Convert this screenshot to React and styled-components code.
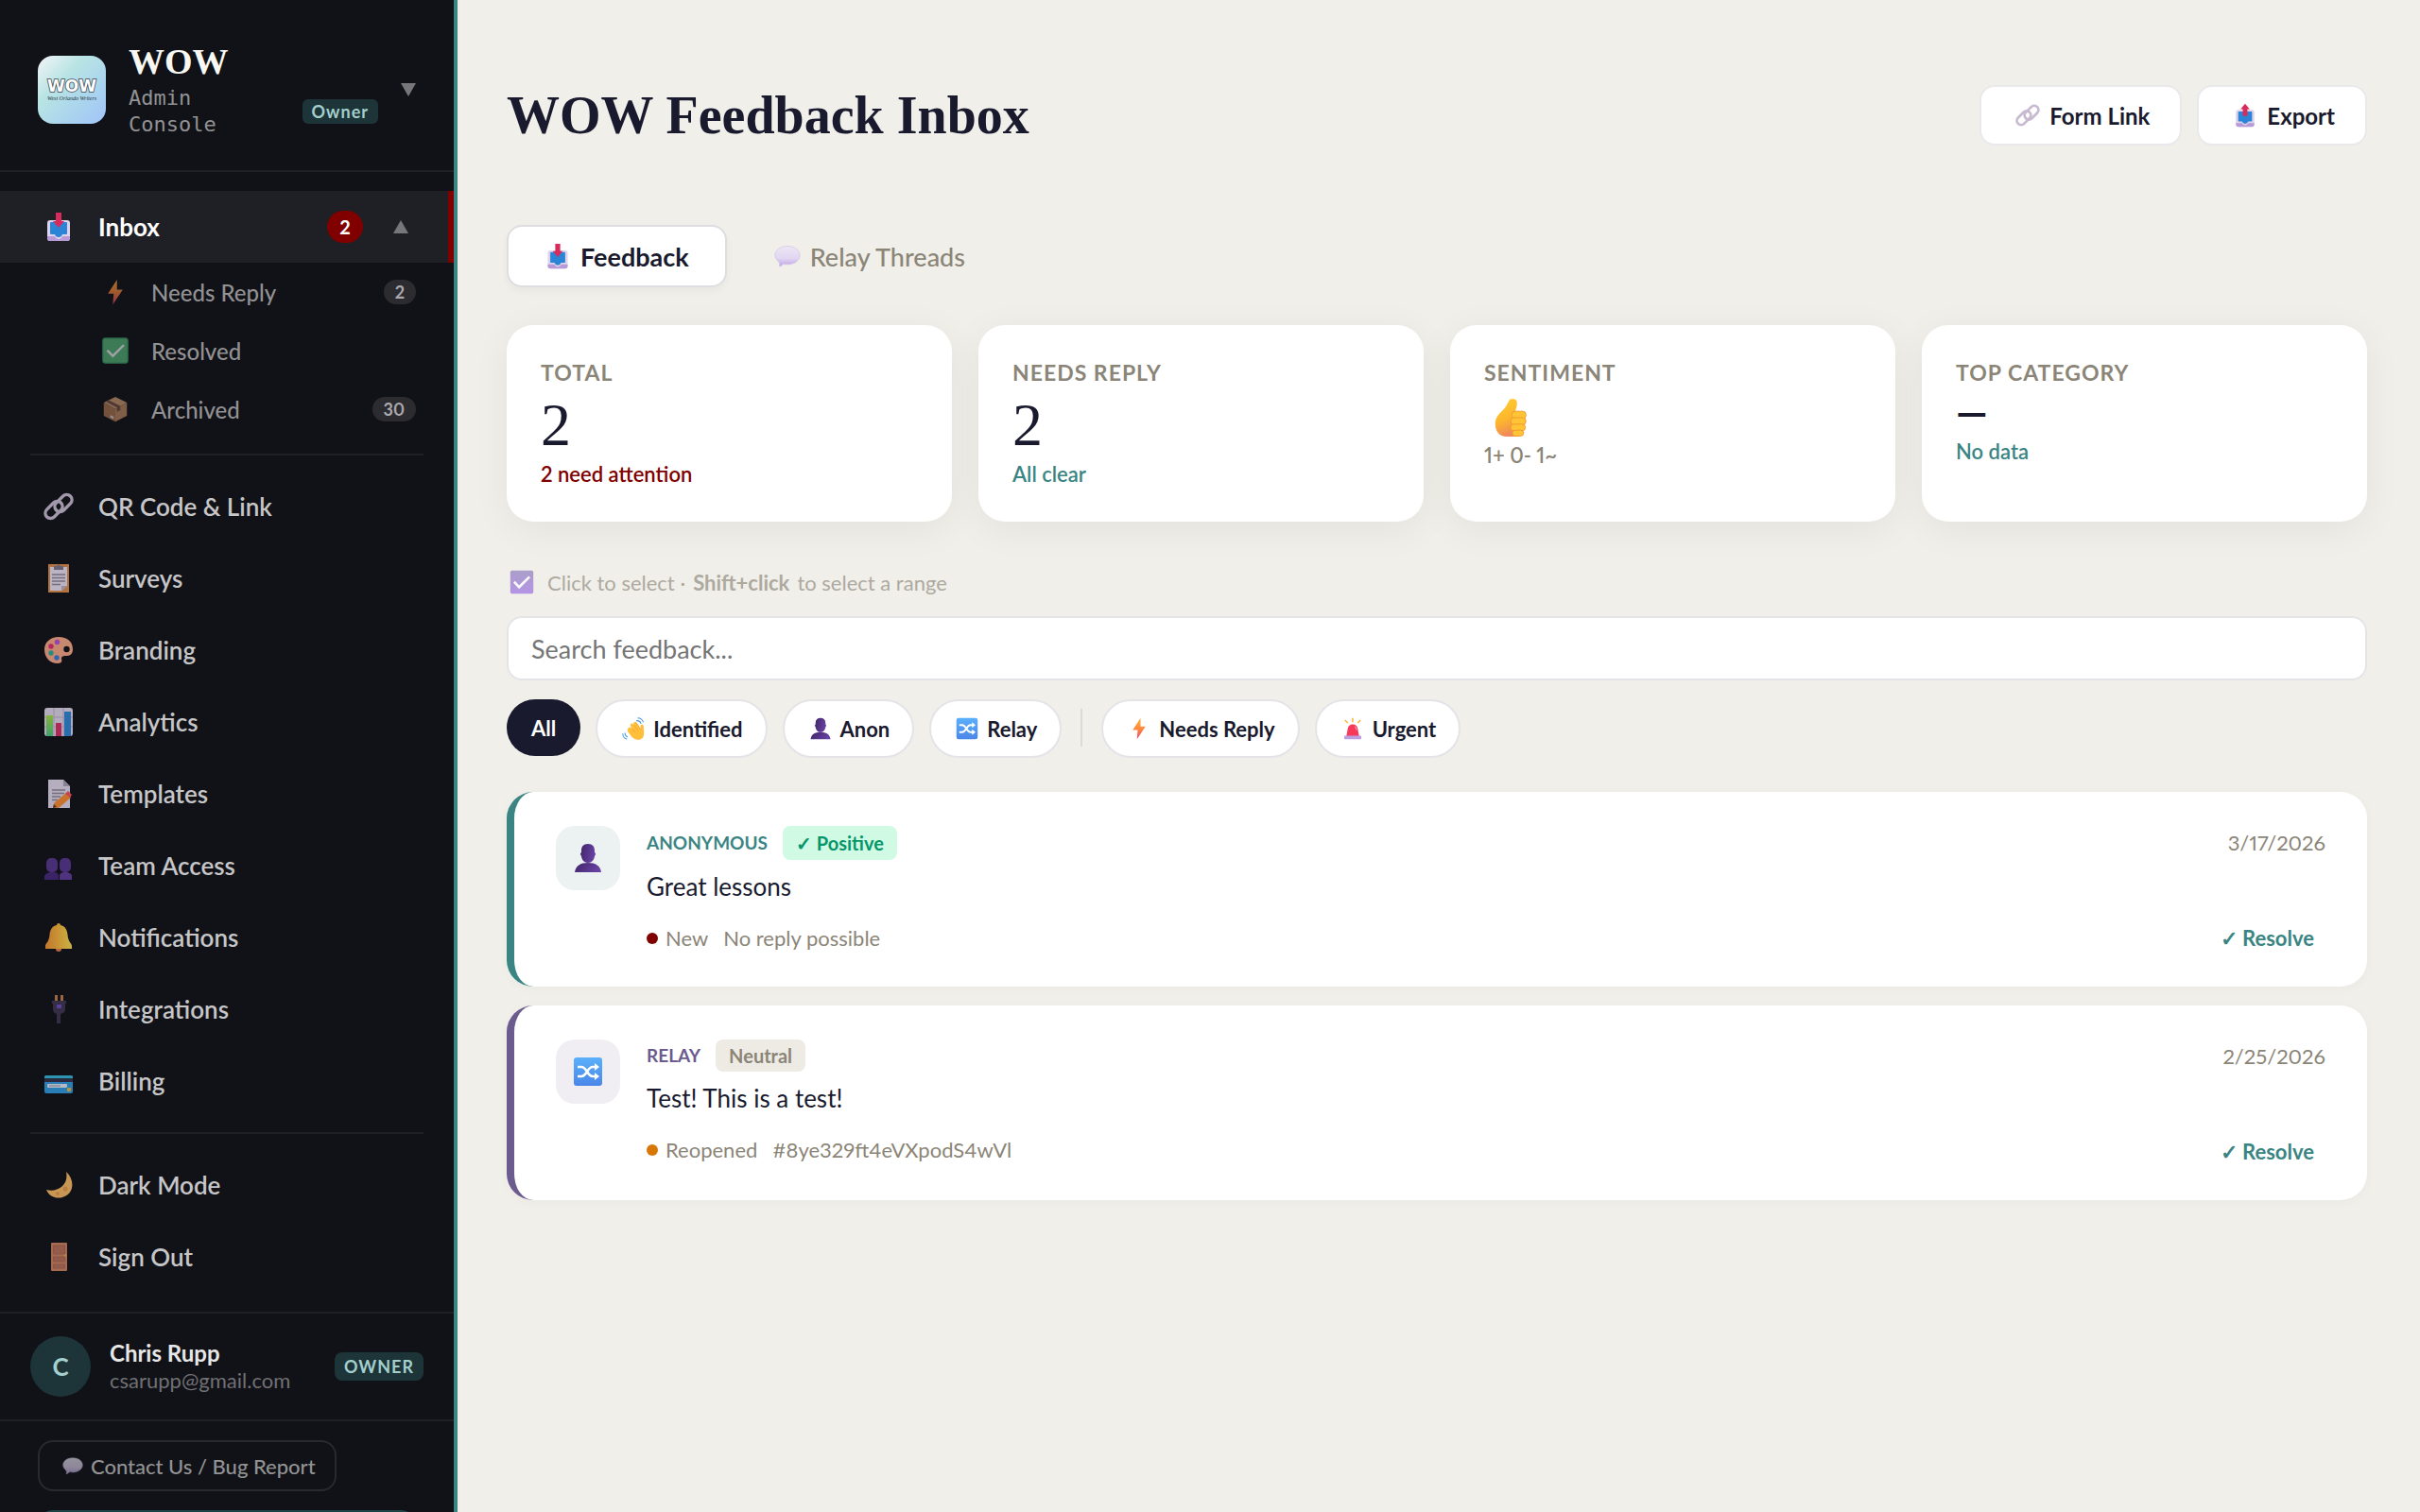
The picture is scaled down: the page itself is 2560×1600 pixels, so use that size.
import React from 'react';
import styled, { createGlobalStyle } from 'styled-components';

const sans = "Lato, 'Open Sans', sans-serif";
const serif = "'Liberation Serif', serif";
const mono = "'DejaVu Sans Mono', 'Liberation Mono', monospace";

const c = {
  ink: '#1a1a2e',
  muted: '#8b8578',
  teal: '#3a8583',
  purple: '#6b5b8e',
  red: '#800000',
  page: '#f0efea',
  side: '#111217',
  line: '#1f2025',
  mint: '#a3cfcd',
  tealDark: '#1d3438',
  border: '#e4e4e8',
};

const Global = createGlobalStyle`
  *, *::before, *::after { box-sizing: border-box; }
  body {
    margin: 0;
    background: ${c.page};
    color: ${c.ink};
    font-family: ${sans};
    font-variant-numeric: proportional-nums;
  }
  button, input { font-family: inherit; margin: 0; }
  button { cursor: pointer; }
  h1, p, ul { margin: 0; padding: 0; }
  ul { list-style: none; }
  a { color: inherit; text-decoration: none; }
`;

/* ---------- icons ---------- */

const Svg = styled.svg`
  display: block;
  flex: none;
  width: ${(p) => p.$size}px;
  height: ${(p) => p.$size}px;
  opacity: ${(p) => p.$opacity ?? 1};
`;

const Tray = ({ up }) => (
  <>
    <rect x="4" y="9" width="24" height="22" rx="3" fill="#ddd3ec" />
    <path d="M4 26h8q1 3 4 3t4-3h8v2q0 3-3 3H7q-3 0-3-3z" fill="#b79ad6" />
    <path d="M8 11h16q1 0 1 1v11q0 1-1 1h-4q-1 3-4 3t-4-3H8q-1 0-1-1V12q0-1 1-1z" fill="#2b84d6" />
    {up ? (
      <path d="M16 1l6 7h-3v9h-6V8h-3z" fill="#d92a5c" />
    ) : (
      <path d="M13 1h6v9h3l-6 7-6-7h3z" fill="#d92a5c" />
    )}
  </>
);

const drawings = {
  inbox: <Tray />,
  outbox: <Tray up />,
  bolt: (
    <>
      <defs>
        <linearGradient id="bolt" x1="0" y1="0" x2="0" y2="1">
          <stop offset="0" stopColor="#ffb13d" />
          <stop offset="0.5" stopColor="#ff8a3c" />
          <stop offset="1" stopColor="#f0446e" />
        </linearGradient>
      </defs>
      <path d="M18 1L7 18h7l-1 13 12-18h-7z" fill="url(#bolt)" />
    </>
  ),
  check: (
    <>
      <rect x="1" y="1" width="30" height="30" rx="3" fill="#5bc183" />
      <rect x="1" y="1" width="30" height="30" rx="3" fill="none" stroke="#3fa76d" strokeWidth="1.5" />
      <path d="M7 16.500l6 6L25.500 10" fill="none" stroke="#fff" strokeWidth="2.800" strokeLinecap="round" />
    </>
  ),
  box: (
    <>
      <path d="M16 1l14 7-14 8L2 8z" fill="#d9a578" />
      <path d="M2 8l14 8v15L2 24z" fill="#b67b56" />
      <path d="M30 8l-14 8v15l14-7z" fill="#c88f66" />
      <path d="M8 5l14 7v5l-4 2v-5L5 7z" fill="#7c5347" />
      <path d="M10 23l4 2v3l-4-2z" fill="#eadff0" />
    </>
  ),
  link: (
    <g fill="none" stroke="#c7bad0" strokeWidth="3.400">
      <rect x="10.500" y="7" width="21" height="11" rx="5.500" transform="rotate(-45 21 12.500)" />
      <rect x="0.500" y="14" width="21" height="11" rx="5.500" transform="rotate(-45 11 19.500)" />
    </g>
  ),
  clipboard: (
    <>
      <path d="M5 1h22v30H5z" fill="#d88c4c" />
      <path d="M7 4h18v20l-6 5H7z" fill="#e6deee" />
      <path d="M19 29v-5h6z" fill="#b9aec6" />
      <path d="M11 3h3q2-3 4 0h3v4H11z" fill="#7d7488" />
      <path d="M9 12h14M9 15.500h14M9 19h14M9 22.500h9" stroke="#8d8498" strokeWidth="1.300" />
    </>
  ),
  palette: (
    <>
      <path d="M16 2C7 2 1 8 1 15c0 9 6 15 14 15 6 0 4-4 4-6 1-2 3-2 6-2 4 0 6-3 6-7C31 7 25 2 16 2z" fill="#f6a586" />
      <circle cx="24.500" cy="15" r="3.200" fill="#111217" />
      <circle cx="14.500" cy="7.500" r="2.700" fill="#b64fd0" />
      <circle cx="8" cy="12" r="2.700" fill="#e22c70" />
      <circle cx="8" cy="19" r="2.700" fill="#2fa99b" />
      <circle cx="14" cy="24" r="2.700" fill="#3a7ad9" />
    </>
  ),
  chart: (
    <>
      <defs>
        <linearGradient id="bar" x1="0" y1="0" x2="0" y2="1">
          <stop offset="0" stopColor="#a5dc45" />
          <stop offset="1" stopColor="#4cc583" />
        </linearGradient>
      </defs>
      <rect x="1" y="1" width="30" height="30" rx="3" fill="#dcd3e6" />
      <path d="M1 11h30M1 21h30M11 1v30M21 1v30" stroke="#b8adc4" strokeWidth="1" />
      <rect x="3" y="9" width="7" height="22" fill="url(#bar)" />
      <rect x="13" y="17" width="6" height="14" fill="#d82f66" />
      <rect x="22" y="5" width="7" height="26" fill="#2e84d4" />
    </>
  ),
  memo: (
    <>
      <path d="M5 1h16l7 7v23H5z" fill="#ded5e8" />
      <path d="M21 1v7h7z" fill="#a99eb6" />
      <path d="M9 12h14M9 15.500h13M9 19h9M9 22.500h6" stroke="#8d8498" strokeWidth="1.300" />
      <path d="M24 15l5 5-13 11-6 0 1-5z" fill="#f78b32" />
      <path d="M26 13l4 4-2 3-5-4z" fill="#f4545a" />
      <path d="M10 31l1-4 3 3z" fill="#5c3a2e" />
    </>
  ),
  team: (
    <g fill="#56358c">
      <rect x="3" y="8" width="12" height="15" rx="5" />
      <rect x="17" y="8" width="12" height="15" rx="5" />
      <path d="M1 31v-4q1-3 6-4h4q4 0 5 3v5z" fill="#46297a" />
      <path d="M17 31v-5q1-3 5-3h3q5 1 5 4v4z" fill="#5f3c9a" />
    </g>
  ),
  bell: (
    <>
      <defs>
        <linearGradient id="bell" x1="0" y1="0" x2="1" y2="0">
          <stop offset="0" stopColor="#ee9036" />
          <stop offset="0.700" stopColor="#f9c540" />
          <stop offset="1" stopColor="#f4d75c" />
        </linearGradient>
      </defs>
      <circle cx="16" cy="28" r="3" fill="#e27a50" />
      <path d="M16 1q2 0 2 2c5 1 7 5 7.500 10 .5 8 4.500 9 4.500 12v3H2v-3c0-3 4-4 4.500-12C7 8 9 4 14 3q0-2 2-2z" fill="url(#bell)" />
    </>
  ),
  plug: (
    <>
      <path d="M12 1h3v7h-3zM18 1h3v7h-3z" fill="#c07c4e" />
      <path d="M9 7h15v3h-1v6q0 4-5 5v10h-4V21q-4-1-4-5v-6H9z" fill="#3d3450" />
      <path d="M14 11h5v4h-5z" fill="#6a4bc0" />
    </>
  ),
  card: (
    <>
      <rect x="1" y="10" width="30" height="19" rx="2" fill="#2f9ae0" />
      <path d="M1 13v-1q0-2 2-2h26q2 0 2 2v1z" fill="#35b6d8" />
      <rect x="1" y="13" width="30" height="4" fill="#33304a" />
      <rect x="4" y="19" width="21" height="4" rx="1" fill="#dfe3f0" />
      <path d="M6 21h12" stroke="#8d93a8" />
      <rect x="25" y="23" width="4" height="4" rx="1" fill="#e8b23a" />
    </>
  ),
  moon: (
    <>
      <path d="M24 2c10 9 8 24-4 27C13 31 6 28 3 21c12 3 24-5 21-19z" fill="#f7b964" />
      <circle cx="23" cy="20" r="2.500" fill="#e59a50" />
      <circle cx="15" cy="25" r="2" fill="#e59a50" />
    </>
  ),
  door: (
    <>
      <rect x="8" y="1" width="17" height="30" rx="1" fill="#cc8162" />
      <path d="M10.500 4h12v9h-12zM10.500 16h12v5h-12zM10.500 24h12v4h-12z" fill="#b56f58" stroke="#a8664f" />
      <circle cx="23" cy="14.500" r="1.300" fill="#f0a23c" />
    </>
  ),
  bubble: (
    <>
      <defs>
        <linearGradient id="bubble" x1="0" y1="0" x2="0" y2="1">
          <stop offset="0" stopColor="#ece7f3" />
          <stop offset="0.600" stopColor="#e2d6f2" />
          <stop offset="1" stopColor="#bfa3e6" />
        </linearGradient>
      </defs>
      <path
        d="M16 4c9 0 15 5 15 11s-6 11-15 11c-2 0-4 0-5-.5q-2 3-5 3 1-3 0-5C3 21 1 18 1 15 1 9 7 4 16 4z"
        fill="url(#bubble)"
        stroke="#d2c3e6"
        strokeWidth="0.800"
      />
    </>
  ),
  thumb: (
    <>
      <defs>
        <linearGradient id="thumb" x1="0" y1="0" x2="0.300" y2="1">
          <stop offset="0" stopColor="#ffce33" />
          <stop offset="0.600" stopColor="#fdb62c" />
          <stop offset="1" stopColor="#f0895a" />
        </linearGradient>
      </defs>
      <path d="M18 0c3.500 0 4 3 3 7l-1.500 5H26v16q-1 4-5 4h-8C6 32 3 27 3 21c0-5 3-8 6-11 3-3 4-5 5.500-8 .5-1.500 1.500-2 3.500-2z" fill="url(#thumb)" />
      <g fill="#fec436" stroke="#f0962e" strokeWidth="0.700">
        <rect x="17" y="10.500" width="12" height="6.500" rx="3" />
        <rect x="16" y="16" width="13" height="6" rx="3" />
        <rect x="16" y="21.500" width="12.500" height="5.500" rx="2.700" />
        <rect x="17.500" y="26.500" width="9.500" height="5" rx="2.500" />
      </g>
    </>
  ),
  tick: (
    <>
      <defs>
        <linearGradient id="tick" x1="0" y1="0" x2="0" y2="1">
          <stop offset="0" stopColor="#8674b8" />
          <stop offset="1" stopColor="#9465e4" />
        </linearGradient>
      </defs>
      <rect x="1" y="1" width="30" height="30" rx="2" fill="url(#tick)" />
      <path d="M6 15.500l6.500 7L26 9" fill="none" stroke="#fff" strokeWidth="3.200" />
    </>
  ),
  wave: (
    <>
      <path
        d="M9 15q2-2 4 0l1 1-2-4q-1-2 1-3t3 1l1 1-1-2q0-2 2-2.500t3 1.500l5 8v-3q0-3 2-3t2.500 3l.5 9q0 9-8 10-5 0-9-4l-6-8q-1-3 1-5z"
        fill="#ffbf3a"
      />
      <path d="M14 16l5 6M17 11l6 8M21 9l5 8" stroke="#f0a034" strokeWidth="1" />
      <path d="M20 5q5-1 7 4M22 1q6 0 8 6M4 22q0 4 4 6M1 23q0 6 6 8" fill="none" stroke="#4a9ad8" strokeWidth="1.400" />
    </>
  ),
  person: (
    <>
      <defs>
        <linearGradient id="person" x1="0" y1="0" x2="1" y2="0.300">
          <stop offset="0" stopColor="#3f2566" />
          <stop offset="1" stopColor="#6741a3" />
        </linearGradient>
      </defs>
      <path d="M16 1c5 0 7 3 7 7v2q2 1 0 4c-.5 4-3 7-7 7s-6.500-3-7-7q-2-3 0-4V8c0-4 2-7 7-7z" fill="url(#person)" />
      <path d="M2 31c1-7 6-10 14-10s13 3 14 10z" fill="url(#person)" />
    </>
  ),
  shuffle: (
    <>
      <defs>
        <linearGradient id="shuffle" x1="0" y1="0" x2="0" y2="1">
          <stop offset="0" stopColor="#5ab0fb" />
          <stop offset="1" stopColor="#4a86ea" />
        </linearGradient>
      </defs>
      <rect x="1" y="1" width="30" height="30" rx="3" fill="url(#shuffle)" />
      <path d="M5 11h4c6 0 6 10 12 10h3M5 21h4c6 0 6-10 12-10h3" fill="none" stroke="#fff" strokeWidth="2.600" />
      <path d="M23 7l5 4-5 4zM23 17l5 4-5 4z" fill="#fff" />
    </>
  ),
  siren: (
    <>
      <path d="M16 1v6M5 4l4 4M27 4l-4 4" stroke="#fbb53c" strokeWidth="2" />
      <path d="M7 27l2-11q1-6 7-6t7 6l2 11z" fill="#f8395a" />
      <path d="M19 13q2 1 2 5" stroke="#ff9db0" strokeWidth="1.600" fill="none" />
      <rect x="4" y="26" width="24" height="5" rx="1" fill="#bb9fe0" />
    </>
  ),
};

const Icon = ({ name, size, opacity }) => (
  <Svg viewBox="0 0 32 32" $size={size} $opacity={opacity} aria-hidden="true">
    {drawings[name]}
  </Svg>
);

const Caret = ({ up }) => (
  <Svg viewBox="0 0 16 16" $size={16} aria-hidden="true">
    <path d={up ? 'M8 1l8 14H0z' : 'M0 1h16L8 15z'} fill="#77777b" />
  </Svg>
);

/* ---------- sidebar ---------- */

const Layout = styled.div`
  display: flex;
  align-items: flex-start;
`;

const Sidebar = styled.aside`
  position: sticky;
  top: 0;
  flex: none;
  display: flex;
  flex-direction: column;
  width: 484px;
  height: 100vh;
  overflow: hidden;
  background: ${c.side};
  border-right: 4px solid ${c.teal};
  > * { flex: none; }
`;

const Brand = styled.header`
  display: flex;
  align-items: center;
  gap: 24px;
  padding: 44px 40px 34px;
  border-bottom: 2px solid ${c.line};
`;

const Logo = styled.svg`
  flex: none;
  width: 72px;
  height: 72px;
  border-radius: 16px;
  background: linear-gradient(135deg, #f3f4f8 0%, #b9e4e4 35%, #a9d3ee 70%, #a2c4fa 100%);
`;

const BrandText = styled.div`
  flex: 1;
`;

const BrandName = styled.p`
  margin-bottom: 4px;
  color: #f8f7f2;
  font: 700 38px/42px ${serif};
`;

const BrandRow = styled.div`
  display: flex;
  align-items: center;
  justify-content: space-between;
`;

const BrandSub = styled.p`
  width: min-content;
  color: #929294;
  font: 400 22px/28px ${mono};
`;

const Role = styled.span`
  padding: 0 10px;
  border-radius: 6px;
  background: ${c.tealDark};
  color: ${c.mint};
  font-size: 18px;
  font-weight: 700;
  line-height: 26px;
  letter-spacing: 1px;
`;

const CaretButton = styled.button`
  padding: 0;
  border: 0;
  background: none;
`;

const Nav = styled.nav`
  padding: 20px 0;
`;

const NavLink = styled.a`
  display: flex;
  align-items: center;
  gap: 26px;
  height: 76px;
  padding: 0 42px 0 46px;
  color: ${(p) => (p.$active ? '#fff' : '#c6c6c8')};
  font-size: 26px;
  font-weight: ${(p) => (p.$active ? 700 : 600)};
  background: ${(p) => (p.$active ? '#1f2026' : 'none')};
  border-right: ${(p) => (p.$active ? `6px solid ${c.red}` : '0')};
`;

const NavLabel = styled.span`
  flex: 1;
`;

const Count = styled.span`
  min-width: 38px;
  margin-right: 6px;
  padding: 0 12px;
  border-radius: 17px;
  background: ${c.red};
  color: #fff;
  font-size: 20px;
  font-weight: 700;
  line-height: 34px;
  text-align: center;
`;

const SubLink = styled.a`
  display: flex;
  align-items: center;
  gap: 24px;
  height: 62px;
  padding: 0 40px 0 108px;
  color: #919194;
  font-size: 24px;
  font-weight: 500;
`;

const SubCount = styled.span`
  padding: 0 12px;
  border-radius: 13px;
  background: #2b2b30;
  color: #a9a9ac;
  font-size: 18px;
  font-weight: 700;
  line-height: 26px;
`;

const Rule = styled.hr`
  height: 2px;
  margin: 16px 32px;
  border: 0;
  background: ${c.line};
`;

const Account = styled.section`
  display: flex;
  align-items: center;
  gap: 20px;
  padding: 24px 32px;
  border-top: 2px solid ${c.line};
`;

const Avatar = styled.span`
  display: grid;
  place-items: center;
  width: 64px;
  height: 64px;
  border-radius: 50%;
  background: ${c.tealDark};
  color: ${c.mint};
  font-size: 26px;
  font-weight: 700;
`;

const Person = styled.div`
  flex: 1;
`;

const PersonName = styled.p`
  color: #e7e7e8;
  font-size: 24px;
  font-weight: 700;
  line-height: 30px;
`;

const PersonMail = styled.p`
  color: #707074;
  font-size: 22px;
  line-height: 28px;
`;

const OwnerTag = styled.span`
  padding: 0 10px;
  border-radius: 8px;
  background: ${c.tealDark};
  color: ${c.mint};
  font-size: 18px;
  font-weight: 700;
  line-height: 30px;
  letter-spacing: 1px;
`;

const Support = styled.footer`
  display: flex;
  flex-direction: column;
  gap: 20px;
  padding: 20px 40px;
  border-top: 2px solid ${c.line};
`;

const ContactButton = styled.button`
  display: flex;
  align-items: center;
  align-self: flex-start;
  gap: 8px;
  height: 54px;
  padding: 0 20px 0 24px;
  border: 2px solid #29292e;
  border-radius: 16px;
  background: none;
  color: #929294;
  font-size: 22px;
  font-weight: 500;
`;

const SupportPanel = styled.div`
  height: 54px;
  border-radius: 16px;
  background: #1f4448;
`;

/* ---------- main ---------- */

const Main = styled.main`
  flex: 1;
  min-width: 0;
  padding: 90px 56px 90px 52px;
`;

const PageHead = styled.header`
  display: flex;
  align-items: center;
  justify-content: space-between;
  margin-bottom: 84px;
`;

const Title = styled.h1`
  font: 700 56px/64px ${serif};
`;

const Row = styled.div`
  display: flex;
  align-items: ${(p) => p.$align ?? 'center'};
  gap: ${(p) => p.$gap}px;
`;

const HeadButton = styled.button`
  display: flex;
  align-items: center;
  gap: 10px;
  height: 64px;
  padding: 0 32px 0 36px;
  border: 2px solid #e9e9ec;
  border-radius: 16px;
  background: #fff;
  color: ${c.ink};
  font-size: 24px;
  font-weight: 700;
`;

const Tab = styled.button`
  display: flex;
  align-items: center;
  gap: 10px;
  height: 66px;
  padding: 0 38px;
  border: 2px solid ${(p) => (p.$active ? '#dedee2' : 'transparent')};
  border-radius: 16px;
  background: ${(p) => (p.$active ? '#fff' : 'none')};
  box-shadow: ${(p) => (p.$active ? '0 4px 8px rgba(0, 0, 0, 0.04)' : 'none')};
  color: ${(p) => (p.$active ? c.ink : c.muted)};
  font-size: 27px;
  font-weight: ${(p) => (p.$active ? 700 : 500)};
`;

const Stats = styled.section`
  display: grid;
  grid-template-columns: repeat(4, 1fr);
  gap: 28px;
  margin: 40px 0 48px;
`;

const Stat = styled.article`
  padding: 36px;
  border-radius: 28px;
  background: #fff;
  box-shadow: 0 8px 40px rgba(0, 0, 0, 0.06);
`;

const StatLabel = styled.p`
  color: ${c.muted};
  font-size: 23px;
  font-weight: 700;
  line-height: 28px;
  letter-spacing: 1px;
`;

const StatValue = styled.p`
  display: flex;
  align-items: ${(p) => (p.$short ? 'flex-end' : 'center')};
  height: ${(p) => (p.$short ? 60 : 80)}px;
  padding: ${(p) => (p.$short ? '0 8px 6px' : '4px 0 0')};
  font: 400 64px/76px ${serif};
`;

const StatDash = styled.p`
  font: 900 42px/56px ${sans};
`;

const StatNote = styled.p`
  color: ${(p) => p.$color};
  font-size: 22px;
  font-weight: 600;
  line-height: 28px;
`;

const Hint = styled.p`
  display: flex;
  align-items: center;
  gap: 8px;
  height: 32px;
  padding-left: 3px;
  margin-bottom: 20px;
  color: ${c.muted};
  font-size: 22px;
  opacity: 0.65;
  svg { margin-right: 6px; }
`;

const Search = styled.input`
  display: block;
  width: 100%;
  height: 68px;
  margin-bottom: 20px;
  padding: 0 24px;
  border: 2px solid ${c.border};
  border-radius: 16px;
  background: #fff;
  color: ${c.ink};
  font-size: 27px;
  outline: none;
  &::placeholder { color: #757575; opacity: 1; }
`;

const Pill = styled.button`
  display: flex;
  align-items: center;
  gap: 7px;
  height: ${(p) => (p.$active ? 60 : 62)}px;
  padding: 0 ${(p) => (p.$active ? 26 : 24)}px;
  border: ${(p) => (p.$active ? '0' : `2px solid ${c.border}`)};
  border-radius: 31px;
  background: ${(p) => (p.$active ? c.ink : '#fff')};
  color: ${(p) => (p.$active ? '#fff' : c.ink)};
  font-size: 22px;
  font-weight: 700;
`;

const IconSlot = styled.span`
  display: grid;
  place-items: center;
  width: 28px;
`;

const Separator = styled.span`
  width: 2px;
  height: 40px;
  margin: 10px 4px;
  background: #dcdbd8;
`;

const Feed = styled.ul`
  display: flex;
  flex-direction: column;
  gap: 20px;
  margin-top: 36px;
`;

const Entry = styled.li`
  display: flex;
  gap: 28px;
  padding: 36px 44px;
  border-left: 8px solid ${(p) => p.$accent};
  border-radius: 28px;
  background: #fff;
  box-shadow: 0 2px 12px rgba(0, 0, 0, 0.03);
`;

const EntryIcon = styled.span`
  display: grid;
  place-items: center;
  width: 68px;
  height: 68px;
  border-radius: 20px;
  background: ${(p) => p.$tint};
`;

const EntryBody = styled.div`
  flex: 1;
`;

const Source = styled.span`
  color: ${(p) => p.$color};
  font-size: 19px;
  font-weight: 700;
  line-height: 34px;
`;

const Mood = styled.span`
  padding: 0 14px;
  border-radius: 8px;
  background: ${(p) => (p.$good ? '#d1fae5' : '#eeebe5')};
  color: ${(p) => (p.$good ? '#059669' : c.muted)};
  font-size: 20px;
  font-weight: 700;
  line-height: ${(p) => (p.$good ? 36 : 34)}px;
`;

const Message = styled.p`
  margin: 8px 0 20px;
  font-size: 26px;
  line-height: 40px;
`;

const Meta = styled.div`
  display: flex;
  align-items: center;
  gap: 8px;
  color: ${c.muted};
  font-size: 22px;
  line-height: 30px;
`;

const Dot = styled.span`
  width: 12px;
  height: 12px;
  border-radius: 50%;
  background: ${(p) => p.$color};
`;

const MetaNote = styled.span`
  margin-left: 8px;
`;

const EntrySide = styled.div`
  display: flex;
  flex-direction: column;
  align-items: flex-end;
  gap: 68px;
  color: ${c.muted};
  font-size: 22px;
  line-height: 36px;
`;

const Resolve = styled.button`
  height: 30px;
  padding: 0 12px;
  border: 0;
  background: none;
  color: ${c.teal};
  font-size: 22px;
  font-weight: 700;
  line-height: 30px;
`;

/* ---------- data ---------- */

const subLinks = [
  ['bolt', 'Needs Reply', 2],
  ['check', 'Resolved'],
  ['box', 'Archived', 30],
];

const links = [
  ['link', 'QR Code & Link'],
  ['clipboard', 'Surveys'],
  ['palette', 'Branding'],
  ['chart', 'Analytics'],
  ['memo', 'Templates'],
  ['team', 'Team Access'],
  ['bell', 'Notifications'],
  ['plug', 'Integrations'],
  ['card', 'Billing'],
];

const sessionLinks = [
  ['moon', 'Dark Mode'],
  ['door', 'Sign Out'],
];

const filters = [
  ['wave', 'Identified'],
  ['person', 'Anon'],
  ['shuffle', 'Relay'],
];

const flags = [
  ['bolt', 'Needs Reply'],
  ['siren', 'Urgent'],
];

const entries = [
  {
    icon: 'person', source: 'ANONYMOUS', accent: c.teal, tint: '#ebf2f1', mood: '✓ Positive', good: true,
    message: 'Great lessons', dot: c.red, status: 'New', note: 'No reply possible', date: '3/17/2026',
  },
  {
    icon: 'shuffle', source: 'RELAY', accent: c.purple, tint: '#f0eef3', mood: 'Neutral',
    message: 'Test! This is a test!', dot: '#d97706', status: 'Reopened', note: '#8ye329ft4eVXpodS4wVl', date: '2/25/2026',
  },
];

const NavItem = ({ icon, label }) => (
  <NavLink href="#">
    <Icon name={icon} size={32} opacity={0.8} />
    <NavLabel>{label}</NavLabel>
  </NavLink>
);

const FilterPill = ({ icon, label }) => (
  <Pill type="button">
    <IconSlot><Icon name={icon} size={24} /></IconSlot>
    {label}
  </Pill>
);

export default function App() {
  return (
    <Layout>
      <Global />
      <Sidebar>
        <Brand>
          <Logo viewBox="0 0 72 72" aria-hidden="true">
            <text x="36" y="38" textAnchor="middle" fontFamily="DejaVu Sans" fontWeight="700" fontSize="17" fill="#fff" stroke="#3c4650" strokeWidth="1.600" paintOrder="stroke">WOW</text>
            <text x="36" y="47" textAnchor="middle" fontFamily="Liberation Serif" fontStyle="italic" fontSize="6" fill="#27343c">West Orlando Writers</text>
          </Logo>
          <BrandText>
            <BrandName>WOW</BrandName>
            <BrandRow>
              <BrandSub>Admin Console</BrandSub>
              <Role>Owner</Role>
            </BrandRow>
          </BrandText>
          <CaretButton type="button"><Caret /></CaretButton>
        </Brand>

        <Nav>
          <NavLink href="#" $active>
            <Icon name="inbox" size={32} />
            <NavLabel>Inbox</NavLabel>
            <Count>2</Count>
            <Caret up />
          </NavLink>
          {subLinks.map(([icon, label, count]) => (
            <SubLink href="#" key={label}>
              <Icon name={icon} size={28} opacity={0.6} />
              <NavLabel>{label}</NavLabel>
              {count && <SubCount>{count}</SubCount>}
            </SubLink>
          ))}
          <Rule />
          {links.map(([icon, label]) => <NavItem key={label} icon={icon} label={label} />)}
          <Rule />
          {sessionLinks.map(([icon, label]) => <NavItem key={label} icon={icon} label={label} />)}
        </Nav>

        <Account>
          <Avatar>C</Avatar>
          <Person>
            <PersonName>Chris Rupp</PersonName>
            <PersonMail>csarupp@gmail.com</PersonMail>
          </Person>
          <OwnerTag>OWNER</OwnerTag>
        </Account>

        <Support>
          <ContactButton type="button">
            <Icon name="bubble" size={22} opacity={0.6} />
            Contact Us / Bug Report
          </ContactButton>
          <SupportPanel />
        </Support>
      </Sidebar>

      <Main>
        <PageHead>
          <Title>WOW Feedback Inbox</Title>
          <Row $gap={16}>
            <HeadButton type="button"><Icon name="link" size={26} />Form Link</HeadButton>
            <HeadButton type="button"><Icon name="outbox" size={26} />Export</HeadButton>
          </Row>
        </PageHead>

        <Row $gap={10}>
          <Tab type="button" $active><Icon name="inbox" size={28} />Feedback</Tab>
          <Tab type="button"><Icon name="bubble" size={28} />Relay Threads</Tab>
        </Row>

        <Stats>
          <Stat>
            <StatLabel>TOTAL</StatLabel>
            <StatValue>2</StatValue>
            <StatNote $color={c.red}>2 need attention</StatNote>
          </Stat>
          <Stat>
            <StatLabel>NEEDS REPLY</StatLabel>
            <StatValue>2</StatValue>
            <StatNote $color={c.teal}>All clear</StatNote>
          </Stat>
          <Stat>
            <StatLabel>SENTIMENT</StatLabel>
            <StatValue $short><Icon name="thumb" size={40} /></StatValue>
            <StatNote $color={c.muted}>1+ 0- 1~</StatNote>
          </Stat>
          <Stat>
            <StatLabel>TOP CATEGORY</StatLabel>
            <StatDash>—</StatDash>
            <StatNote $color={c.teal}>No data</StatNote>
          </Stat>
        </Stats>

        <Hint>
          <Icon name="tick" size={26} />
          <span>Click to select ·</span>
          <strong>Shift+click</strong>
          <span>to select a range</span>
        </Hint>
        <Search type="search" placeholder="Search feedback..." aria-label="Search feedback..." />
        <Row $gap={16} $align="flex-start">
          <Pill type="button" $active>All</Pill>
          {filters.map(([icon, label]) => <FilterPill key={label} icon={icon} label={label} />)}
          <Separator />
          {flags.map(([icon, label]) => <FilterPill key={label} icon={icon} label={label} />)}
        </Row>

        <Feed>
          {entries.map((e) => (
            <Entry key={e.source} $accent={e.accent}>
              <EntryIcon $tint={e.tint}><Icon name={e.icon} size={32} /></EntryIcon>
              <EntryBody>
                <Row $gap={16}>
                  <Source $color={e.accent}>{e.source}</Source>
                  <Mood $good={e.good}>{e.mood}</Mood>
                </Row>
                <Message>{e.message}</Message>
                <Meta>
                  <Dot $color={e.dot} />
                  <span>{e.status}</span>
                  <MetaNote>{e.note}</MetaNote>
                </Meta>
              </EntryBody>
              <EntrySide>
                <time>{e.date}</time>
                <Resolve type="button">✓ Resolve</Resolve>
              </EntrySide>
            </Entry>
          ))}
        </Feed>
      </Main>
    </Layout>
  );
}
